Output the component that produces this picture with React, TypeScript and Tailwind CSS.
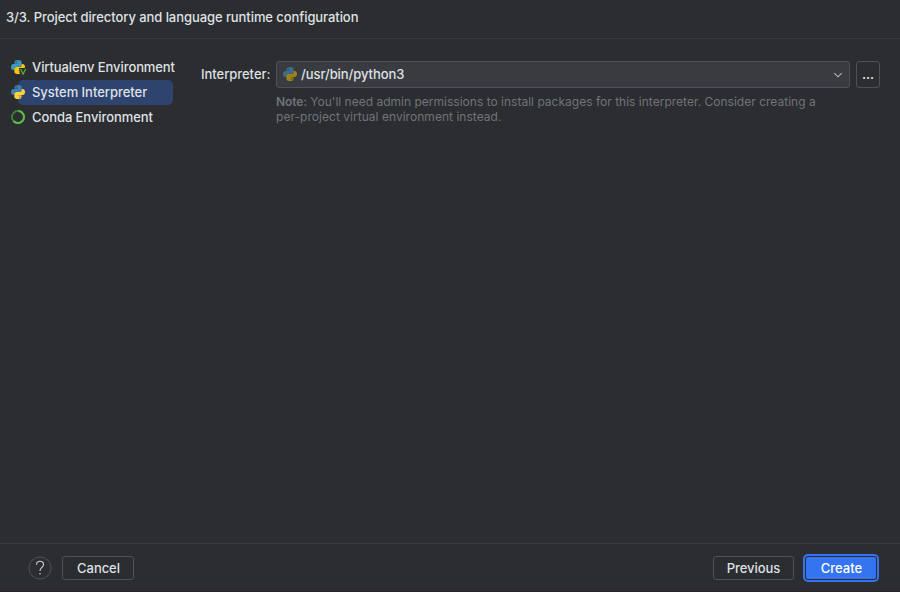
import React from "react";

const head =
  "M11.9 0C8 0 6 1.300 6 3.600V6.300h6v.5H3.900C1.500 6.800 0 9 0 12s1.500 5.300 3.700 5.300h2.200v-2.200c0-2.100 1.700-3.300 3.800-3.300h5.200c1.900 0 3.300-1.400 3.300-3.200v-5C18.200 1.200 15.800 0 11.900 0zM8.900 2a1.100 1.100 0 1 1 0 2.200a1.100 1.100 0 1 1 0-2.200z";

function PythonIcon({ top, bottom, className = "" }: { top: string; bottom: string; className?: string }) {
  return (
    <svg viewBox="0 0 24 24" className={`mb-px block size-3.5 shrink-0 ${className}`}>
      <path d={head} fill={top} />
      <path d={head} fill={bottom} transform="rotate(180 12 12)" />
    </svg>
  );
}

function VirtualenvIcon() {
  return (
    <svg viewBox="0 0 16 16" className="-mr-0.5 mb-px block size-4 shrink-0">
      <g transform="translate(0 1) scale(.5833)">
        <path d={head} fill="#3d95c4" />
        <path d={head} fill="#f5c312" transform="rotate(180 12 12)" />
      </g>
      <path d="M8 9h8V16H9.300z" fill="#2b2d30" />
      <path d="M9.600 9.900l2.500 5.400 2.500-5.400" fill="none" stroke="#57a83f" strokeWidth="1.300" />
    </svg>
  );
}

function CondaIcon() {
  return (
    <svg viewBox="0 0 14 14" className="mb-px block size-3.5 shrink-0">
      <circle cx="7" cy="7" r="6" fill="none" stroke="#43943a" strokeWidth="1.9" strokeDasharray="1.8 .4" />
      <path d="M7.500 1A6 6 0 1 1 2.500 11" fill="none" stroke="#5fbb46" strokeWidth="2" />
    </svg>
  );
}

export default function App() {
  return (
    <div className="flex h-[592px] w-[900px] flex-col overflow-hidden border-b border-[#29202a] bg-[#2b2d30] font-['Inter',sans-serif] text-[13px] leading-4 font-medium text-[#dfe1e5]">
      <header className="flex h-[39px] shrink-0 items-center border-b border-[#393b40] pb-[5px] pl-1.5 tracking-[-0.073px]">
        3/3. Project directory and language runtime configuration
      </header>
      <main className="flex min-h-0 flex-1 pt-4">
        <nav className="w-[201px] shrink-0 tracking-[-0.09px] whitespace-nowrap">
          <div className="flex h-[25px] items-center gap-[7px] pl-[11px]">
            <VirtualenvIcon />
            <span className="pb-0.5">Virtualenv Environment</span>
          </div>
          <div className="ml-[18px] flex h-[25px] w-[155px] items-center gap-[7px] rounded-[5px] bg-[#2e436e]">
            <PythonIcon top="#3f7db3" bottom="#fdd33c" className="-ml-[7px]" />
            <span className="pb-0.5 tracking-[-0.03px]">System Interpreter</span>
          </div>
          <div className="flex h-[25px] items-center gap-[7px] pl-[11px]">
            <CondaIcon />
            <span className="pb-0.5 tracking-[-0.08px]">Conda Environment</span>
          </div>
        </nav>
        <section className="flex flex-1 items-start pt-1.5">
          <label className="w-[75px] shrink-0 pt-[5px] tracking-[-0.04px]">Interpreter:</label>
          <div className="w-[574px] shrink-0">
            <div className="flex h-[27px] items-center rounded-[3px] border border-[#4e5157] bg-[#393b40] px-1.5">
              <PythonIcon top="#3b6d89" bottom="#9f811c" />
              <span className="ml-1 pb-0.5 tracking-[-0.08px]">/usr/bin/python3</span>
              <svg viewBox="0 0 10 10" className="mt-px ml-auto size-2.5" fill="none" stroke="#b4b8bf" strokeWidth="1.1">
                <path d="M1.300 3.200l3.700 3.600 3.700-3.600" />
              </svg>
            </div>
            <p className="pt-1.5 text-[12px] leading-[15px] font-normal tracking-[0.01px] text-[#6f737a]">
              <b className="font-semibold tracking-[-0.12px]">Note:</b> You'll need admin permissions to install packages for this interpreter. Consider creating a<br />
              <span className="tracking-[0.035px]">per-project virtual environment instead.</span>
            </p>
          </div>
          <button className="ml-1.5 h-[27px] w-6 rounded-[3px] border border-[#4e5157] pb-0.5 font-semibold tracking-[-0.2px]">...</button>
        </section>
      </main>
      <footer className="flex h-12 shrink-0 items-center border-t border-[#393b40] pr-[21px] pl-7">
        <button className="flex size-6 items-center justify-center">
          <svg viewBox="0 0 24 24" className="size-6" fill="none">
            <circle cx="12" cy="12" r="11" stroke="#4e5157" />
            <path d="M8.500 8.700c0-2.100 1.400-3.400 3.500-3.400s3.500 1.200 3.500 3.200c0 3-3.500 3-3.500 6.500" stroke="#ced0d6" strokeWidth="1.100" />
            <circle cx="12" cy="17.800" r=".8" fill="#ced0d6" />
          </svg>
        </button>
        <button className="ml-2.5 h-6 w-[72px] rounded-[3px] border border-[#4e5157] pl-px tracking-[-0.05px]">Cancel</button>
        <button className="ml-auto h-6 w-[81px] rounded-[3px] border border-[#4e5157] tracking-[-0.06px]">Previous</button>
        <button className="ml-[9px] h-7 w-[76px] rounded-[5px] border-2 border-[#3574f0] p-px text-white">
          <span className="flex h-full items-center justify-center rounded-[2px] bg-[#3574f0] pl-px">Create</span>
        </button>
      </footer>
    </div>
  );
}
